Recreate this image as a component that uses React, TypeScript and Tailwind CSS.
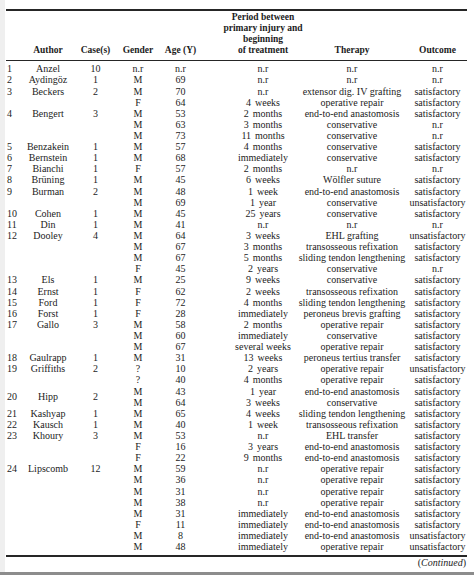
type Row = [string, string, string, string, string, string, string, string]

const rows: Row[] = [
  ['1', 'Anzel', '10', 'n.r', 'n.r', 'n.r', 'n.r', 'n.r'],
  ['2', 'Aydingöz', '1', 'M', '69', 'n.r', 'n.r', 'n.r'],
  ['3', 'Beckers', '2', 'M', '70', 'n.r', 'extensor dig. IV grafting', 'satisfactory'],
  ['', '', '', 'F', '64', '4 weeks', 'operative repair', 'satisfactory'],
  ['4', 'Bengert', '3', 'M', '53', '2 months', 'end-to-end anastomosis', 'satisfactory'],
  ['', '', '', 'M', '63', '3 months', 'conservative', 'n.r'],
  ['', '', '', 'M', '73', '11 months', 'conservative', 'n.r'],
  ['5', 'Benzakein', '1', 'M', '57', '4 months', 'conservative', 'satisfactory'],
  ['6', 'Bernstein', '1', 'M', '68', 'immediately', 'conservative', 'satisfactory'],
  ['7', 'Bianchi', '1', 'F', '57', '2 months', 'n.r', 'n.r'],
  ['8', 'Brüning', '1', 'M', '45', '6 weeks', 'Wölfler suture', 'satisfactory'],
  ['9', 'Burman', '2', 'M', '48', '1 week', 'end-to-end anastomosis', 'satisfactory'],
  ['', '', '', 'M', '69', '1 year', 'conservative', 'unsatisfactory'],
  ['10', 'Cohen', '1', 'M', '45', '25 years', 'conservative', 'satisfactory'],
  ['11', 'Din', '1', 'M', '41', 'n.r', 'n.r', 'n.r'],
  ['12', 'Dooley', '4', 'M', '64', '3 weeks', 'EHL grafting', 'unsatisfactory'],
  ['', '', '', 'M', '67', '3 months', 'transosseous refixation', 'satisfactory'],
  ['', '', '', 'M', '67', '5 months', 'sliding tendon lengthening', 'satisfactory'],
  ['', '', '', 'F', '45', '2 years', 'conservative', 'n.r'],
  ['13', 'Els', '1', 'M', '25', '9 weeks', 'conservative', 'satisfactory'],
  ['14', 'Ernst', '1', 'F', '62', '2 weeks', 'transosseous refixation', 'satisfactory'],
  ['15', 'Ford', '1', 'F', '72', '4 months', 'sliding tendon lengthening', 'satisfactory'],
  ['16', 'Forst', '1', 'F', '28', 'immediately', 'peroneus brevis grafting', 'satisfactory'],
  ['17', 'Gallo', '3', 'M', '58', '2 months', 'operative repair', 'satisfactory'],
  ['', '', '', 'M', '60', 'immediately', 'conservative', 'satisfactory'],
  ['', '', '', 'M', '67', 'several weeks', 'operative repair', 'satisfactory'],
  ['18', 'Gaulrapp', '1', 'M', '31', '13 weeks', 'peroneus tertius transfer', 'satisfactory'],
  ['19', 'Griffiths', '2', '?', '10', '2 years', 'operative repair', 'unsatisfactory'],
  ['', '', '', '?', '40', '4 months', 'operative repair', 'satisfactory'],
  ['20', 'Hipp', '2', 'M', '43', '1 year', 'end-to-end anastomosis', 'satisfactory'],
  ['', '', '', 'M', '64', '3 weeks', 'conservative', 'satisfactory'],
  ['21', 'Kashyap', '1', 'M', '65', '4 weeks', 'sliding tendon lengthening', 'satisfactory'],
  ['22', 'Kausch', '1', 'M', '40', '1 week', 'transosseous refixation', 'satisfactory'],
  ['23', 'Khoury', '3', 'M', '53', 'n.r', 'EHL transfer', 'satisfactory'],
  ['', '', '', 'F', '16', '3 years', 'end-to-end anastomosis', 'satisfactory'],
  ['', '', '', 'F', '22', '9 months', 'end-to-end anastomosis', 'satisfactory'],
  ['24', 'Lipscomb', '12', 'M', '59', 'n.r', 'operative repair', 'satisfactory'],
  ['', '', '', 'M', '36', 'n.r', 'operative repair', 'satisfactory'],
  ['', '', '', 'M', '31', 'n.r', 'operative repair', 'satisfactory'],
  ['', '', '', 'M', '38', 'n.r', 'operative repair', 'satisfactory'],
  ['', '', '', 'M', '31', 'immediately', 'end-to-end anastomosis', 'satisfactory'],
  ['', '', '', 'F', '11', 'immediately', 'end-to-end anastomosis', 'satisfactory'],
  ['', '', '', 'M', '8', 'immediately', 'end-to-end anastomosis', 'unsatisfactory'],
  ['', '', '', 'M', '48', 'immediately', 'operative repair', 'unsatisfactory'],
]

const cols = 'grid grid-cols-[16px_52px_43px_42px_43px_122px_56px_87px]'
const cell = 'flex justify-center whitespace-nowrap'

function Period({ value }: { value: string }) {
  const [num, ...rest] = value.split(' ')
  if (!/^\d+$/.test(num)) return <>{value}</>
  return (
    <span className="flex gap-[4px]">
      <span>{num}</span>
      <span>{rest.join(' ')}</span>
    </span>
  )
}

export default function App() {
  return (
    <div className="flex h-[575px] w-[474px] flex-col bg-white font-['Liberation_Serif',serif] text-[#1c1c1c]">
      <div className="flex flex-1">
        <div className="w-[5px] bg-[#efefef]" />
        <div className="ml-[1px] w-[461px] pt-[9px]">
          <div className="h-[2px] bg-[#262626]" />

          <div className={`${cols} items-end pb-[3.6px] pt-[1px] text-[9.5px] font-bold leading-[11.1px]`}>
            <div />
            <div className={cell}>Author</div>
            <div className={cell}>Case(s)</div>
            <div className={cell}>Gender</div>
            <div className={cell}>Age (Y)</div>
            <div className="flex justify-center text-center">
              <span>
                Period between
                <br />
                primary injury and
                <br />
                beginning
                <br />
                of treatment
              </span>
            </div>
            <div className={cell}>Therapy</div>
            <div className={`${cell} pl-7`}>Outcome</div>
          </div>

          <div className="h-px bg-[#262626]" />

          <div className="pt-[2.4px] text-[10px] leading-[11.12px]">
            {rows.map((r, i) => {
              const shift = r[1] === 'Hipp' ? 'pt-[5px]' : ''
              return (
                <div key={i} className={`${cols} h-[11.12px]`}>
                  <div className={`pl-[1px] whitespace-nowrap ${shift}`}>{r[0]}</div>
                  <div className={`${cell} ${shift}`}>{r[1]}</div>
                  <div className={`${cell} ${shift}`}>{r[2]}</div>
                  <div className={cell}>{r[3]}</div>
                  <div className={cell}>{r[4]}</div>
                  <div className={cell}>
                    <Period value={r[5]} />
                  </div>
                  <div className={cell}>{r[6]}</div>
                  <div className={`${cell} pl-7`}>{r[7]}</div>
                </div>
              )
            })}
          </div>

          <div className="mt-[3px] h-[2px] bg-[#262626]" />
          <div className="pr-[1px] text-right text-[10px] leading-[11px]">
            (<span className="italic">Continued</span>)
          </div>
        </div>
      </div>
      <div className="h-[3px] bg-[#8c8c8c]" />
    </div>
  )
}
